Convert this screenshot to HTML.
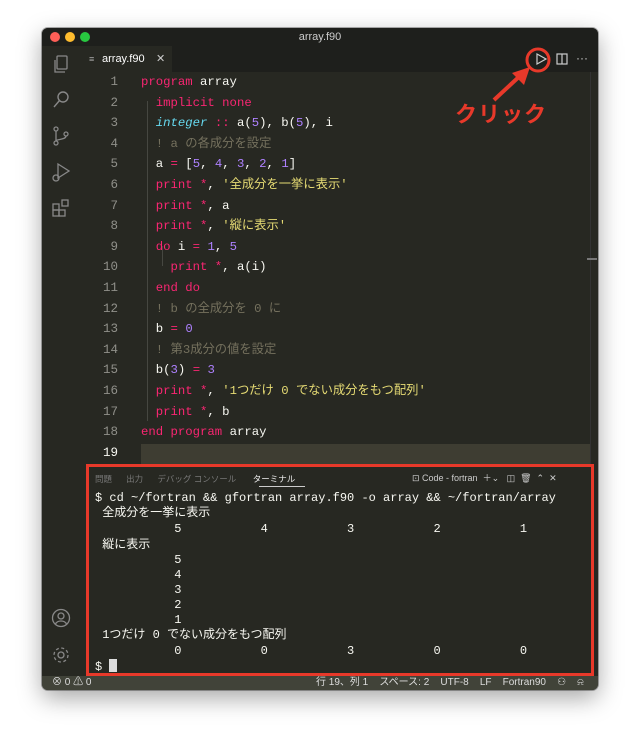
<!DOCTYPE html>
<html><head><meta charset="utf-8"><style>
*{margin:0;padding:0;box-sizing:border-box}
body{width:640px;height:747px;background:#fff;position:relative;overflow:hidden;font-family:"Liberation Sans","Noto Sans CJK JP",sans-serif}
.win{position:absolute;left:42px;top:28px;width:556px;height:662px;background:#272822;border-radius:6px;overflow:hidden;box-shadow:0 8px 24px rgba(0,0,0,.35),0 0 0 1px rgba(0,0,0,.3)}
.title{position:absolute;left:0;top:0;width:556px;height:18px;background:#1e1f1c;color:#ccc;font-size:11px;text-align:center;line-height:18px}
.dot{position:absolute;top:4px;width:10px;height:10px;border-radius:50%}
.act{position:absolute;left:0;top:18px;width:38px;height:630px;background:#272822}
.tabs{position:absolute;left:38px;top:18px;width:518px;height:26px;background:#1e1f1c}
.tab{position:absolute;left:0;top:0;width:92px;height:26px;background:#272822;color:#fff;font-size:11px;line-height:26px;padding-left:22px}
.ln{position:absolute;width:32px;height:20px;line-height:20px;text-align:right;color:#90908a;font-family:"Liberation Mono",monospace;font-size:12.5px}
.l{position:absolute;left:99px;height:20px;line-height:20px;color:#f8f8f2;white-space:pre;font-family:"Liberation Mono","Noto Sans CJK JP",monospace;font-size:12.3px}
.k{color:#f92672}.t{color:#66d9ef;font-style:italic}.n{color:#ae81ff}.s{color:#e6db74}.c{color:#75715e}
.term{position:absolute;left:44px;top:436px;width:508px;height:212px;border:3px solid #e8392a;background:#272822}
.tl{position:absolute;left:6px;height:15px;line-height:15px;white-space:pre;color:#f8f8f2;font-family:"Liberation Mono","Noto Sans CJK JP",monospace;font-size:12px}
.status{position:absolute;left:0;top:648px;width:556px;height:14px;background:#414339;color:#ddd;font-size:10px;line-height:14px}
svg{position:absolute}
</style></head><body>
<div class="win">
<div class="title">array.f90
<div class="dot" style="left:8px;background:#fe5f57"></div><div class="dot" style="left:23px;background:#febc2e"></div><div class="dot" style="left:38px;background:#28c840"></div></div>
<div class="act">
<svg style="left:9px;top:8px" width="20" height="20" fill="none" stroke="#888" stroke-width="1.3"><rect x="6" y="2" width="10" height="13" rx="1"/><path d="M4 6v12h10"/></svg>
<svg style="left:9px;top:44px" width="20" height="20" fill="none" stroke="#888" stroke-width="1.4"><circle cx="12" cy="7" r="5"/><path d="M8.5 10.5L3 17"/></svg>
<svg style="left:9px;top:80px" width="20" height="20" fill="none" stroke="#888" stroke-width="1.3"><circle cx="5" cy="3" r="2"/><circle cx="5" cy="17" r="2"/><circle cx="15" cy="8" r="2"/><path d="M5 5v10M15 10c0 4-10 3-10 5"/></svg>
<svg style="left:9px;top:116px" width="20" height="20" fill="none" stroke="#888" stroke-width="1.3"><path d="M7 2l11 7-11 7z"/><circle cx="5" cy="16" r="3"/></svg>
<svg style="left:9px;top:152px" width="20" height="20" fill="none" stroke="#888" stroke-width="1.3"><rect x="2" y="6" width="6" height="6"/><rect x="2" y="12" width="6" height="6"/><rect x="8" y="12" width="6" height="6"/><rect x="11" y="2" width="6" height="6"/></svg>
<svg style="left:9px;top:562px" width="20" height="20" fill="none" stroke="#888" stroke-width="1.3"><circle cx="10" cy="10" r="8.5"/><circle cx="10" cy="8" r="3"/><path d="M4.5 16c2-4 9-4 11 0"/></svg>
<svg style="left:9px;top:599px" width="20" height="20" fill="none" stroke="#888" stroke-width="1.3"><circle cx="10" cy="10" r="3"/><circle cx="10" cy="10" r="7" stroke-dasharray="3 2.5"/></svg>
</div>
<div class="tabs"><div class="tab"><span style="position:absolute;left:9px;color:#aaa;font-size:9px">≡</span>array.f90<span style="position:absolute;left:76px;color:#ccc">✕</span></div>
<svg style="left:454px;top:6px" width="14" height="14" fill="none" stroke="#ccc" stroke-width="1.2"><path d="M3 2l9 5-9 5z"/></svg>
<svg style="left:476px;top:7px" width="12" height="12" fill="none" stroke="#ccc" stroke-width="1.2"><rect x="1" y="1" width="10" height="10"/><path d="M6 1v10"/></svg>
<span style="position:absolute;left:496px;top:5px;color:#ccc;font-size:12px">···</span>
</div>
<div style="position:absolute;left:99px;top:416px;width:449px;height:20px;background:#3e3d32"></div>
<div style="position:absolute;left:548px;top:44px;width:8px;height:392px;border-left:1px solid #333"></div>
<div style="position:absolute;left:545px;top:230px;width:10px;height:2px;background:#777"></div>
<div style="position:absolute;left:105px;top:73px;width:1px;height:320px;background:#464741"></div>
<div style="position:absolute;left:120px;top:218px;width:1px;height:20px;background:#464741"></div>
<div id="code"></div>
<div class="term">
<div style="position:absolute;left:6px;top:6px;font-size:8.5px;color:#777;white-space:pre">問題      出力      デバッグ コンソール       <span style="color:#eee">ターミナル</span></div>
<div style="position:absolute;left:170px;top:19px;width:46px;height:1px;background:#ccc"></div>
<div style="position:absolute;left:323px;top:4px;font-size:9px;color:#ccc;white-space:pre">⊡ Code - fortran  ＋⌄   ◫  🗑  ⌃  ✕</div>
<div class="tl" style="top:24px">$ cd ~/fortran &amp;&amp; gfortran array.f90 -o array &amp;&amp; ~/fortran/array</div>
<div class="tl" style="top:39px"> 全成分を一挙に表示</div>
<div class="tl" style="top:55px">           5           4           3           2           1</div>
<div class="tl" style="top:71px"> 縦に表示</div>
<div class="tl" style="top:86px">           5</div>
<div class="tl" style="top:101px">           4</div>
<div class="tl" style="top:116px">           3</div>
<div class="tl" style="top:131px">           2</div>
<div class="tl" style="top:146px">           1</div>
<div class="tl" style="top:161px"> 1つだけ 0 でない成分をもつ配列</div>
<div class="tl" style="top:177px">           0           0           3           0           0</div>
<div class="tl" style="top:192px">$ <span style="display:inline-block;width:8px;height:13px;background:#ddd;vertical-align:-2px"></span></div>
</div>
<div class="status"><span style="position:absolute;left:10px">⊗ 0 ⚠ 0</span><span style="position:absolute;left:274px;white-space:pre">行 19、列 1    スペース: 2    UTF-8    LF    Fortran90    ⚇    ⍾</span></div>
</div>
<svg style="left:0;top:0" width="640" height="747"><circle cx="538" cy="60" r="11" fill="none" stroke="#e8392a" stroke-width="3"/><path d="M494 100L522 74" stroke="#e8392a" stroke-width="4"/><path d="M530 67L512 73L524 85z" fill="#e8392a"/></svg>
<div style="position:absolute;left:455px;top:97px;color:#e8392a;font-weight:bold;font-size:22px;font-family:'Noto Sans CJK JP',sans-serif;letter-spacing:1px">クリック</div>
<script>
var L=[
'<span class="k">program</span> array',
'  <span class="k">implicit none</span>',
'  <span class="t">integer</span> <span class="k">::</span> a(<span class="n">5</span>), b(<span class="n">5</span>), i',
'  <span class="c">! a の各成分を設定</span>',
'  a <span class="k">=</span> [<span class="n">5</span>, <span class="n">4</span>, <span class="n">3</span>, <span class="n">2</span>, <span class="n">1</span>]',
'  <span class="k">print *</span>, <span class="s">\'全成分を一挙に表示\'</span>',
'  <span class="k">print *</span>, a',
'  <span class="k">print *</span>, <span class="s">\'縦に表示\'</span>',
'  <span class="k">do</span> i <span class="k">=</span> <span class="n">1</span>, <span class="n">5</span>',
'    <span class="k">print *</span>, a(i)',
'  <span class="k">end do</span>',
'  <span class="c">! b の全成分を 0 に</span>',
'  b <span class="k">=</span> <span class="n">0</span>',
'  <span class="c">! 第3成分の値を設定</span>',
'  b(<span class="n">3</span>) <span class="k">=</span> <span class="n">3</span>',
'  <span class="k">print *</span>, <span class="s">\'1つだけ 0 でない成分をもつ配列\'</span>',
'  <span class="k">print *</span>, b',
'<span class="k">end program</span> array',
''];
var h='';for(var i=0;i<L.length;i++){var y=44+i*20.6;h+='<div class="ln" style="top:'+y+'px;left:44px;'+(i==18?'color:#f8f8f2':'')+'">'+(i+1)+'</div><div class="l" style="top:'+y+'px">'+L[i]+'</div>';}
document.getElementById('code').innerHTML=h;
</script>
</body></html>
